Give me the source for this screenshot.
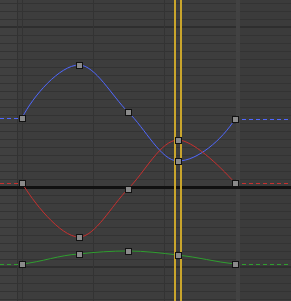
import React from "react";

const W = 291;
const H = 301;

const rows = Array.from({ length: 38 }, (_, i) => 3 + i * 8);
const cols = [22, 93, 164, 236];

const curves = [
  {
    color: "#5068ff",
    y0: 118,
    y1: 119,
    d: "M22 118 C33 96 60 65 79 65 C95 65 112 96 128 112 C145 128 161 161 178 161 C197 161 222 140 235 119",
    keys: [[22, 118], [79, 65], [128, 112], [178, 161], [235, 119]],
  },
  {
    color: "#c8302f",
    y0: 183,
    y1: 183,
    d: "M22 183 C32 200 60 237 79 237 C95 237 112 205 128 189 C145 172 161 140 178 140 C192 140 218 164 235 183",
    keys: [[22, 183], [79, 237], [128, 189], [178, 140], [235, 183]],
  },
  {
    color: "#2f9e2f",
    y0: 264,
    y1: 264,
    d: "M22 264 C41 262 60 255 79 254 C95 252 112 251 128 251 C145 251 161 253 178 255 C197 257 216 262 235 264",
    keys: [[22, 264], [79, 254], [128, 251], [178, 255], [235, 264]],
  },
];

function GraphCanvas() {
  return (
    <svg width={W} height={H} viewBox={`0 0 ${W} ${H}`} className="block" shapeRendering="crispEdges">
      <rect x="0" y="0" width={W} height={H} fill="#3d3d3d" />
      <rect x="0" y="0" width="17" height={H} fill="#404040" />
      <rect x="240" y="0" width={W - 240} height={H} fill="#3b3b3b" />
      {rows.map((y) => (
        <rect key={y} x="0" y={y} width={W} height="1" fill="#333333" />
      ))}
      <rect x="0" y="26" width={W} height="2" fill="#2e2e2e" />
      <rect x="0" y="266" width={W} height="2" fill="#2e2e2e" />
      <rect x="17" y="0" width="1" height={H} fill="#323232" />
      {cols.map((x) => (
        <rect key={x} x={x} y="0" width="1" height={H} fill="#333333" />
      ))}
      <rect x="236" y="0" width="4" height={H} fill="#424242" />
      <rect x="0" y="186" width={W} height="3" fill="#111111" />

      <g shapeRendering="auto">
        {curves.map((c, i) => (
          <g key={i}>
            <line x1="0" y1={c.y0 + 0.5} x2="22" y2={c.y0 + 0.5} stroke={c.color} strokeWidth="1" strokeDasharray="4 3" />
            <line x1="235" y1={c.y1 + 0.5} x2={W} y2={c.y1 + 0.5} stroke={c.color} strokeWidth="1" strokeDasharray="4 3" />
            <path d={c.d} fill="none" stroke={c.color} strokeWidth="1" />
          </g>
        ))}
      </g>

      <rect x="174" y="0" width="2" height={H} fill="#c9a52c" />
      <rect x="180" y="0" width="2" height={H} fill="#c9a52c" />

      {curves.map((c, i) =>
        c.keys.map(([x, y], j) => (
          <rect
            key={`${i}-${j}`}
            x={x - 3}
            y={y - 3}
            width="6"
            height="6"
            fill="#8a8a8a"
            stroke="#111111"
            strokeWidth="1"
          />
        ))
      )}
    </svg>
  );
}

export default function App() {
  return (
    <div className="w-[291px] h-[301px] overflow-hidden bg-[#3d3d3d] font-['Liberation_Sans',sans-serif]">
      <GraphCanvas />
    </div>
  );
}
